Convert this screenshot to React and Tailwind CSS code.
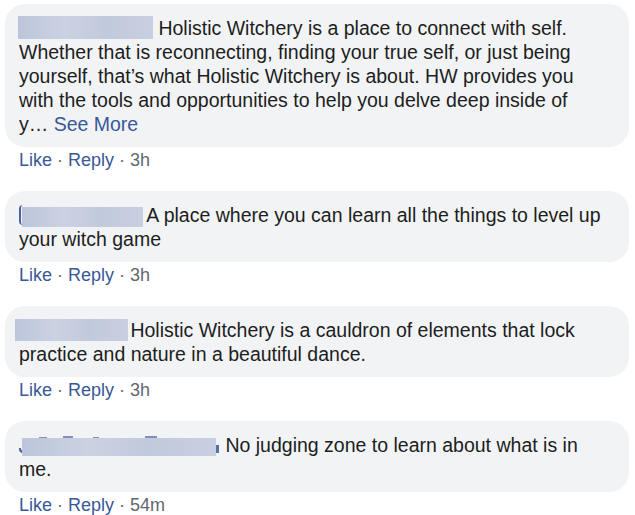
import React from 'react';

const blur =
  'absolute bg-[linear-gradient(90deg,#bcc5da,#cbd2e2_35%,#c1c9dc_65%,#c8cfe0)]';

const NameBlur = ({ width, box, peek }) => (
  <span className="relative inline-block align-top h-[24px]" style={{ width }}>
    {peek}
    <span className={blur} style={box} />
  </span>
);

const comments = [
  {
    name: (
      <NameBlur width={134} box={{ left: -1, top: 0, width: 135, height: 23 }} />
    ),
    text: (
      <>
        Holistic Witchery is a place to connect with self. Whether that is reconnecting, finding
        your true self, or just being yourself, that’s what Holistic Witchery is about. HW provides
        you with the tools and opportunities to help you delve deep inside of{' '}
        <span className="whitespace-nowrap">
          y… <span className="text-[#385898]">See More</span>
        </span>
      </>
    ),
    time: '3h',
  },
  {
    name: (
      <NameBlur
        width={123}
        box={{ left: 3, top: 4, width: 121, height: 20 }}
        peek={
          <span className="absolute left-0 top-[2px] h-[20px] w-[4px] rounded-l-full border-l-[2px] border-[#4a62a0]" />
        }
      />
    ),
    text: 'A place where you can learn all the things to level up your witch game',
    time: '3h',
  },
  {
    name: (
      <NameBlur width={106} box={{ left: -4, top: 1, width: 113, height: 22 }} />
    ),
    text: 'Holistic Witchery is a cauldron of elements that lock practice and nature in a beautiful dance.',
    time: '3h',
  },
  {
    name: (
      <NameBlur
        width={201}
        box={{ left: 3, top: 5, width: 194, height: 18 }}
        peek={
          <>
            <span className="absolute left-[0px] top-[15px] h-[5px] w-[4px] rounded-bl-full border-b-[2px] border-l-[2px] border-[#4a62a0]" />
            <span className="absolute left-[197px] top-[12px] h-[8px] w-[3px] bg-[#5a6fa8]" />
            <span className="absolute left-[20px] top-[4px] h-[2px] w-[8px] bg-[#7f90bd]" />
            <span className="absolute left-[44px] top-[3px] h-[3px] w-[10px] bg-[#7f90bd]" />
            <span className="absolute left-[74px] top-[4px] h-[2px] w-[6px] bg-[#7f90bd]" />
            <span className="absolute left-[126px] top-[3px] h-[3px] w-[12px] bg-[#7f90bd]" />
          </>
        }
      />
    ),
    text: 'No judging zone to learn about what is in me.',
    time: '54m',
  },
];

export default function App() {
  return (
    <div className="w-[635px] h-[515px] overflow-hidden bg-white pt-[4px] pl-[5px] font-['Liberation_Sans',Arial,sans-serif]">
      {comments.map((c, i) => (
        <div key={i} className="mb-[19px]">
          <div className="w-[624px] rounded-[20px] bg-[#f2f3f5] pt-[12px] pb-[11px] pl-[14px] pr-[18px] text-[19.5px] leading-[24px] text-[#1c1e21]">
            {c.name} {c.text}
          </div>
          <div className="mt-[1px] pl-[14px] text-[18px] leading-[24px] text-[#606770]">
            <span className="text-[#385898]">Like</span> · <span className="text-[#385898]">Reply</span> · {c.time}
          </div>
        </div>
      ))}
    </div>
  );
}
